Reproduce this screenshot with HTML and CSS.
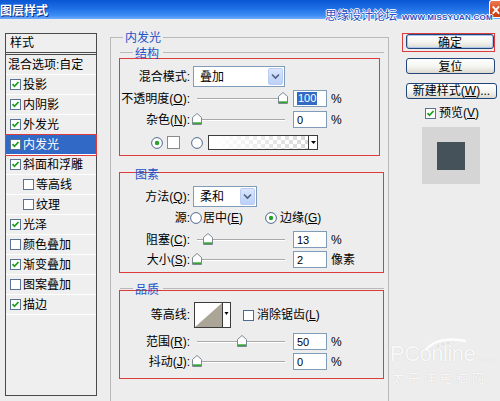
FILE: index.html
```html
<!DOCTYPE html>
<html lang="zh-CN">
<head>
<meta charset="utf-8">
<title>图层样式</title>
<link rel="stylesheet" href="styles.css">
</head>
<body>
<div class="titlebar">
  <span class="title">图层样式</span>
  <span class="close"><svg width="11" height="18" viewBox="0 0 11 18"><path d="M3 5l7 8M10 5l-7 8" stroke="#fff" stroke-width="2" fill="none"/></svg></span>
  <div class="wm"><span class="wm-cn">思缘设计论坛</span><span class="wm-en">WWW.MISSYUAN.COM</span></div>
</div>

<div class="main">
  <div class="list">
    <div class="list-head">样式</div>
    <div class="list-blend">混合选项:自定</div>
    <div class="item"><svg class="cb" width="11" height="11" viewBox="0 0 11 11"><rect x=".5" y=".5" width="10" height="10" fill="#fff" stroke="#5a7294"/><path d="M2.5 5.2l2 2.1 4-4.3" fill="none" stroke="#1f9e1f" stroke-width="1.8"/></svg>投影</div>
    <div class="item"><svg class="cb" width="11" height="11" viewBox="0 0 11 11"><rect x=".5" y=".5" width="10" height="10" fill="#fff" stroke="#5a7294"/><path d="M2.5 5.2l2 2.1 4-4.3" fill="none" stroke="#1f9e1f" stroke-width="1.8"/></svg>内阴影</div>
    <div class="item"><svg class="cb" width="11" height="11" viewBox="0 0 11 11"><rect x=".5" y=".5" width="10" height="10" fill="#fff" stroke="#5a7294"/><path d="M2.5 5.2l2 2.1 4-4.3" fill="none" stroke="#1f9e1f" stroke-width="1.8"/></svg>外发光</div>
    <div class="item on"><svg class="cb" width="11" height="11" viewBox="0 0 11 11"><rect x=".5" y=".5" width="10" height="10" fill="#fff" stroke="#5a7294"/><path d="M2.5 5.2l2 2.1 4-4.3" fill="none" stroke="#1f9e1f" stroke-width="1.8"/></svg>内发光</div>
    <div class="item"><svg class="cb" width="11" height="11" viewBox="0 0 11 11"><rect x=".5" y=".5" width="10" height="10" fill="#fff" stroke="#5a7294"/><path d="M2.5 5.2l2 2.1 4-4.3" fill="none" stroke="#1f9e1f" stroke-width="1.8"/></svg>斜面和浮雕</div>
    <div class="item indent"><svg class="cb" width="11" height="11" viewBox="0 0 11 11"><rect x=".5" y=".5" width="10" height="10" fill="#fff" stroke="#5a7294"/></svg>等高线</div>
    <div class="item indent"><svg class="cb" width="11" height="11" viewBox="0 0 11 11"><rect x=".5" y=".5" width="10" height="10" fill="#fff" stroke="#5a7294"/></svg>纹理</div>
    <div class="item"><svg class="cb" width="11" height="11" viewBox="0 0 11 11"><rect x=".5" y=".5" width="10" height="10" fill="#fff" stroke="#5a7294"/><path d="M2.5 5.2l2 2.1 4-4.3" fill="none" stroke="#1f9e1f" stroke-width="1.8"/></svg>光泽</div>
    <div class="item"><svg class="cb" width="11" height="11" viewBox="0 0 11 11"><rect x=".5" y=".5" width="10" height="10" fill="#fff" stroke="#5a7294"/></svg>颜色叠加</div>
    <div class="item"><svg class="cb" width="11" height="11" viewBox="0 0 11 11"><rect x=".5" y=".5" width="10" height="10" fill="#fff" stroke="#5a7294"/><path d="M2.5 5.2l2 2.1 4-4.3" fill="none" stroke="#1f9e1f" stroke-width="1.8"/></svg>渐变叠加</div>
    <div class="item"><svg class="cb" width="11" height="11" viewBox="0 0 11 11"><rect x=".5" y=".5" width="10" height="10" fill="#fff" stroke="#5a7294"/></svg>图案叠加</div>
    <div class="item"><svg class="cb" width="11" height="11" viewBox="0 0 11 11"><rect x=".5" y=".5" width="10" height="10" fill="#fff" stroke="#5a7294"/><path d="M2.5 5.2l2 2.1 4-4.3" fill="none" stroke="#1f9e1f" stroke-width="1.8"/></svg>描边</div>
  </div>

  <fieldset class="group">
    <legend>内发光</legend>

    <section class="sub">
      <div class="subtitle"><span>结构</span></div>
      <div class="red narrow s1">
        <div class="row r-select">
          <span class="lab">混合模式:</span>
          <span class="select w92"><span class="val">叠加</span><span class="arrow"><svg width="9" height="7" viewBox="0 0 9 7"><path d="M1 1.5l3.5 3.5 3.5-3.5" fill="none" stroke="#4d6185" stroke-width="1.6"/></svg></span></span>
        </div>
        <div class="row r-a">
          <span class="lab">不透明度(<u>O</u>):</span>
          <span class="slider"><span class="track"><svg class="thumb" style="left:81px" width="10" height="12" viewBox="0 0 10 12"><path d="M.5 4.5L5 .5l4.5 4V11.5H.5z" fill="#fff" stroke="#7c8894"/><path d="M1 9.3h8v1.7H1z" fill="#35a335"/></svg></span></span>
          <span class="num sel"><span>100</span></span>
          <span class="unit">%</span>
        </div>
        <div class="row r-b">
          <span class="lab">杂色(<u>N</u>):</span>
          <span class="slider"><span class="track"><svg class="thumb" style="left:-5px" width="10" height="12" viewBox="0 0 10 12"><path d="M.5 4.5L5 .5l4.5 4V11.5H.5z" fill="#fff" stroke="#7c8894"/><path d="M1 9.3h8v1.7H1z" fill="#35a335"/></svg></span></span>
          <span class="num"><span>0</span></span>
          <span class="unit">%</span>
        </div>
        <div class="row r-colors">
          <svg class="radio" width="12" height="12" viewBox="0 0 12 12"><circle cx="6" cy="6" r="5.4" fill="#fff" stroke="#4f6a8f"/><circle cx="6" cy="6" r="2.2" fill="#26a326"/></svg>
          <span class="swatch"></span>
          <svg class="radio r2" width="12" height="12" viewBox="0 0 12 12"><circle cx="6" cy="6" r="5.4" fill="#fff" stroke="#4f6a8f"/></svg>
          <span class="gradient"><span class="gfill"></span><span class="garrow"><svg width="5" height="3" viewBox="0 0 5 3"><path d="M0 0h5L2.5 3z" fill="#000"/></svg></span></span>
        </div>
      </div>
    </section>

    <section class="sub">
      <div class="subtitle nolines s2t"><span>图素</span></div>
      <div class="red s2">
        <div class="row r-select">
          <span class="lab">方法(<u>Q</u>):</span>
          <span class="select w64"><span class="val">柔和</span><span class="arrow"><svg width="9" height="7" viewBox="0 0 9 7"><path d="M1 1.5l3.5 3.5 3.5-3.5" fill="none" stroke="#4d6185" stroke-width="1.6"/></svg></span></span>
        </div>
        <div class="row r-src">
          <span class="lab">源:</span>
          <svg class="radio" width="12" height="12" viewBox="0 0 12 12"><circle cx="6" cy="6" r="5.4" fill="#fff" stroke="#4f6a8f"/></svg>
          <span class="rtext">居中(<u>E</u>)</span>
          <svg class="radio r3" width="12" height="12" viewBox="0 0 12 12"><circle cx="6" cy="6" r="5.4" fill="#fff" stroke="#4f6a8f"/><circle cx="6" cy="6" r="2.2" fill="#26a326"/></svg>
          <span class="rtext">边缘(<u>G</u>)</span>
        </div>
        <div class="row r-a">
          <span class="lab">阻塞(<u>C</u>):</span>
          <span class="slider"><span class="track"><svg class="thumb" style="left:6px" width="10" height="12" viewBox="0 0 10 12"><path d="M.5 4.5L5 .5l4.5 4V11.5H.5z" fill="#fff" stroke="#7c8894"/><path d="M1 9.3h8v1.7H1z" fill="#35a335"/></svg></span></span>
          <span class="num"><span>13</span></span>
          <span class="unit">%</span>
        </div>
        <div class="row r-a">
          <span class="lab">大小(<u>S</u>):</span>
          <span class="slider"><span class="track"><svg class="thumb" style="left:-5px" width="10" height="12" viewBox="0 0 10 12"><path d="M.5 4.5L5 .5l4.5 4V11.5H.5z" fill="#fff" stroke="#7c8894"/><path d="M1 9.3h8v1.7H1z" fill="#35a335"/></svg></span></span>
          <span class="num"><span>2</span></span>
          <span class="unit">像素</span>
        </div>
      </div>
    </section>

    <section class="sub">
      <div class="subtitle s3t"><span>品质</span></div>
      <div class="red s3">
        <div class="row r-contour">
          <span class="lab">等高线:</span>
          <svg class="contour" width="37" height="26" viewBox="0 0 37 26"><rect x=".5" y=".5" width="36" height="25" fill="#fff" stroke="#3c3c3c"/><path d="M1 25L28 1V25z" fill="#aba597"/><path d="M28.5 0v26" stroke="#3c3c3c"/><path d="M30.5 10h4l-2 3z" fill="#000"/></svg>
          <svg class="cb aa" width="11" height="11" viewBox="0 0 11 11"><rect x=".5" y=".5" width="10" height="10" fill="#fff" stroke="#4f6a8f"/></svg>
          <span class="rtext">消除锯齿(<u>L</u>)</span>
        </div>
        <div class="row r-a r-range">
          <span class="lab">范围(<u>R</u>):</span>
          <span class="slider"><span class="track"><svg class="thumb" style="left:40px" width="10" height="12" viewBox="0 0 10 12"><path d="M.5 4.5L5 .5l4.5 4V11.5H.5z" fill="#fff" stroke="#7c8894"/><path d="M1 9.3h8v1.7H1z" fill="#35a335"/></svg></span></span>
          <span class="num"><span>50</span></span>
          <span class="unit">%</span>
        </div>
        <div class="row r-a">
          <span class="lab">抖动(<u>J</u>):</span>
          <span class="slider"><span class="track"><svg class="thumb" style="left:-5px" width="10" height="12" viewBox="0 0 10 12"><path d="M.5 4.5L5 .5l4.5 4V11.5H.5z" fill="#fff" stroke="#7c8894"/><path d="M1 9.3h8v1.7H1z" fill="#35a335"/></svg></span></span>
          <span class="num"><span>0</span></span>
          <span class="unit">%</span>
        </div>
      </div>
    </section>
  </fieldset>

  <div class="side">
    <div class="okwrap"><span class="btn ok">确定</span></div>
    <span class="btn reset">复位</span>
    <span class="btn new">新建样式(<u>W</u>)...</span>
    <div class="preview-row"><svg class="cb" width="11" height="11" viewBox="0 0 11 11"><rect x=".5" y=".5" width="10" height="10" fill="#fff" stroke="#5a7294"/><path d="M2.5 5.2l2 2.1 4-4.3" fill="none" stroke="#1f9e1f" stroke-width="1.8"/></svg><span>预览(<u>V</u>)</span></div>
    <div class="preview"><span class="sq"></span></div>
  </div>
</div>

<div class="pconline">
  <svg class="pc-arc" width="44" height="14" viewBox="0 0 44 14"><path d="M2 13C8 4 24 0 42 4" fill="none" stroke="#fff" stroke-width="2.5"/><circle cx="14" cy="9" r="1" fill="#d9d9d9"/><circle cx="19" cy="7" r="1" fill="#d9d9d9"/><circle cx="24" cy="6" r="1" fill="#d9d9d9"/></svg>
  <div class="pc-logo">PConline<span class="pc-com">.com.cn</span></div>
  <div class="pc-cn">太平洋电脑网</div>
</div>
</body>
</html>
```

FILE: styles.css
```css
* { box-sizing: border-box; }
html, body { margin: 0; }
body {
  width: 500px;
  height: 401px;
  overflow: hidden;
  position: relative;
  background: #ededed;
  color: #000;
  font: 12px/14px "Liberation Sans", "Noto Sans CJK SC", sans-serif;
}
u { text-decoration: underline; }

/* title bar */
.titlebar {
  position: relative;
  height: 19px;
  display: flex;
  align-items: center;
  background: linear-gradient(#0a55d4, #1f6fe6 45%, #3b8bf3 80%, #6eaafc);
}
.title {
  color: #fff;
  font: bold 12px/14px "Noto Sans CJK SC", sans-serif;
  text-shadow: 1px 1px 0 #0b2f86;
  margin-top: 1px;
}
.close {
  margin-left: auto;
  align-self: flex-start;
  width: 11px;
  height: 18px;
  display: flex;
  background: linear-gradient(#ec7a52, #d7481c 60%, #c93c12);
  border: 1px solid #fff;
  border-right: none;
  border-radius: 3px 0 0 3px;
}
.wm {
  position: absolute;
  left: 325px;
  top: 8px;
  display: flex;
  align-items: baseline;
  gap: 5px;
  color: #2a4ec2;
  text-shadow: -1px 0 #fff, 1px 0 #fff, 0 -1px #fff, 0 1px #fff;
}
.wm-cn { font: 12px/14px "Noto Sans CJK SC", sans-serif; }
.wm-en { font: bold 8px/10px "Liberation Sans", sans-serif; letter-spacing: 0.2px; }

/* main layout */
.main {
  display: flex;
  align-items: flex-start;
  padding-left: 5px;
}

/* left style list */
.list {
  margin-top: 14px;
  width: 92px;
  height: 363px;
  border: 1px solid #4a4a4a;
  background: #efefef;
}
.list-head {
  height: 21px;
  padding-left: 4px;
  display: flex;
  align-items: center;
  border-bottom: 3px double #4a4a4a;
}
.list-blend {
  height: 20px;
  padding-left: 2px;
  display: flex;
  align-items: center;
  border-bottom: 1px solid #fff;
}
.item {
  height: 20px;
  padding-left: 4px;
  display: flex;
  align-items: center;
  gap: 2px;
  border-bottom: 1px solid #fff;
}
.item.indent { padding-left: 17px; }
.item.on {
  background: #3169c6;
  color: #fff;
  outline: 1px solid #e03c3c;
}
.cb { flex: none; display: block; }

/* center group */
.group {
  margin: 11px 0 0 13px;
  padding: 3px 4px 0 8px;
  width: 279px;
  height: 371px;
  min-width: 0;
  border: 1px solid #b9b9b9;
  border-bottom: none;
}
.group > legend {
  margin-left: 4px;
  padding: 0 2px;
  color: #2553c8;
  line-height: 14px;
  font-family: "Noto Sans CJK SC", sans-serif;
}
.subtitle {
  position: relative;
  z-index: 1;
  height: 11px;
  display: flex;
  align-items: center;
  color: #2553c8;
  font-family: "Noto Sans CJK SC", sans-serif;
}
.subtitle span { line-height: 11px; }
.subtitle::before {
  content: "";
  width: 13px;
  height: 1px;
  margin: 0 2px 0 1px;
  background: #b9b9b9;
}
.subtitle::after {
  content: "";
  flex: 1;
  height: 1px;
  margin-left: 4px;
  background: #b9b9b9;
}
.subtitle.nolines::before, .subtitle.nolines::after { background: transparent; }
.s2t { margin-top: 12px; }
.s3t { margin-top: 10px; }

.red {
  border: 1px solid #dc3c3c;
  width: 265px;
}
.red.narrow { width: 261px; }
.s1 { padding-bottom: 5px; }
.s2 { margin-top: -7px; padding-bottom: 4px; }
.s3 { margin-top: -4px; padding-bottom: 8px; }

.row {
  display: flex;
  align-items: center;
  height: 17px;
  margin-top: 3px;
}
.lab {
  flex: none;
  width: 72px;
  padding-right: 2px;
  text-align: right;
  white-space: nowrap;
}
.r-select { height: 21px; }
.s1 .r-select { margin-top: 7px; }
.s2 .r-select { margin-top: 13px; }
.s1 .r-b { margin-top: 4px; }
.r-colors { height: 15px; margin-top: 7px; }
.r-src { height: 20px; margin-top: 1px; }
.r-contour { height: 26px; margin-top: 11px; }
.r-range { margin-top: 5px; }

.select {
  flex: none;
  margin-left: 1px;
  height: 21px;
  display: flex;
  align-items: center;
  padding: 0 1px 0 6px;
  background: #fff;
  border: 1px solid #7f9db9;
}
.select.w92 { width: 92px; }
.select.w64 { width: 64px; }
.select .arrow {
  margin-left: auto;
  width: 15px;
  height: 17px;
  display: flex;
  align-items: center;
  justify-content: center;
  border: 1px solid #bccdf3;
  border-radius: 2px;
  background: linear-gradient(#dbe6fe, #bcd0f8);
}

.slider {
  flex: none;
  width: 101px;
  padding: 0 8px 0 5px;
}
.track {
  display: block;
  position: relative;
  height: 2px;
  border-top: 1px solid #a9a9a9;
  border-bottom: 1px solid #fff;
}
.thumb {
  position: absolute;
  top: -7px;
  display: block;
}
.num {
  flex: none;
  width: 34px;
  height: 17px;
  display: flex;
  align-items: center;
  padding-left: 3px;
  background: #fff;
  border: 1px solid #7f9db9;
  font-size: 11px;
}
.num.sel span {
  background: #316ac5;
  color: #fff;
  padding: 0 1px;
  line-height: 13px;
}
.unit { margin-left: 4px; font-size: 11px; }
.row .unit:last-child { font-size: 12px; }

.radio { flex: none; display: block; margin-left: 31px; }
.swatch {
  flex: none;
  width: 13px;
  height: 13px;
  margin-left: 4px;
  background: #fff;
  border: 1px solid #8a8a8a;
}
.radio.r2 { margin-left: 11px; }
.gradient {
  flex: none;
  margin-left: 5px;
  width: 110px;
  height: 15px;
  display: flex;
  border: 1px solid #3c3c3c;
}
.gfill {
  flex: 1;
  background:
    linear-gradient(to right, #fff 5%, rgba(255,255,255,0) 100%),
    repeating-conic-gradient(#d8d8d8 0 25%, #fff 0 50%) 0 0 / 8px 8px;
}
.garrow {
  width: 9px;
  display: flex;
  align-items: center;
  justify-content: center;
  background: #fff;
  border-left: 1px solid #3c3c3c;
}

.r-src .radio { margin-left: -2px; }
.rtext { margin-left: 1px; white-space: nowrap; }
.r-src .radio.r3 { margin-left: 22px; }
.r-src .radio.r3 + .rtext { margin-left: 3px; }

.contour { flex: none; display: block; margin-left: 2px; }
.cb.aa { margin-left: 12px; }
.cb.aa + .rtext { margin-left: 3px; }

/* right column */
.side {
  margin: 14px 0 0 13px;
  width: 95px;
  display: flex;
  flex-direction: column;
  align-items: flex-start;
}
.okwrap {
  width: 93px;
  height: 19px;
  padding-left: 3px;
  border: 1px solid #dc3c3c;
}
.btn {
  height: 16px;
  display: flex;
  align-items: center;
  justify-content: center;
  border: 1px solid #24457a;
  border-radius: 3px;
  background: linear-gradient(#ffffff, #f4f4f0 55%, #dcd9d0);
  font-family: "Noto Sans CJK SC", "Liberation Sans", sans-serif;
  white-space: nowrap;
}
.btn.ok { width: 88px; height: 15px; box-shadow: inset 0 0 0 1px #a9c4ee; }
.btn.reset { width: 89px; margin: 6px 0 0 4px; }
.btn.new { width: 91px; margin: 9px 0 0 4px; font-family: "Liberation Sans", "Noto Sans CJK SC", sans-serif; }
.preview-row {
  margin: 8px 0 0 23px;
  height: 12px;
  display: flex;
  align-items: center;
  gap: 3px;
}
.preview {
  margin: 8px 0 0 20px;
  width: 58px;
  height: 57px;
  display: flex;
  align-items: center;
  justify-content: center;
  background: #d5d5d5;
}
.sq {
  width: 28px;
  height: 28px;
  background: #46525a;
}

/* PConline watermark */
.pconline {
  position: absolute;
  left: 390px;
  top: 343px;
  color: rgba(255,255,255,0.9);
  text-shadow: 0 0 1px rgba(0,0,0,0.16);
}
.pc-arc {
  position: absolute;
  left: 34px;
  top: -6px;
  opacity: 0.9;
}
.pc-logo {
  font: 22px/22px "Liberation Sans", sans-serif;
  letter-spacing: -0.5px;
  white-space: nowrap;
}
.pc-com { font-size: 5px; letter-spacing: 0; margin-left: 1px; }
.pc-cn {
  font: 12px/15px "Noto Sans CJK SC", sans-serif;
  letter-spacing: 4px;
  margin-left: 2px;
  white-space: nowrap;
}
```
